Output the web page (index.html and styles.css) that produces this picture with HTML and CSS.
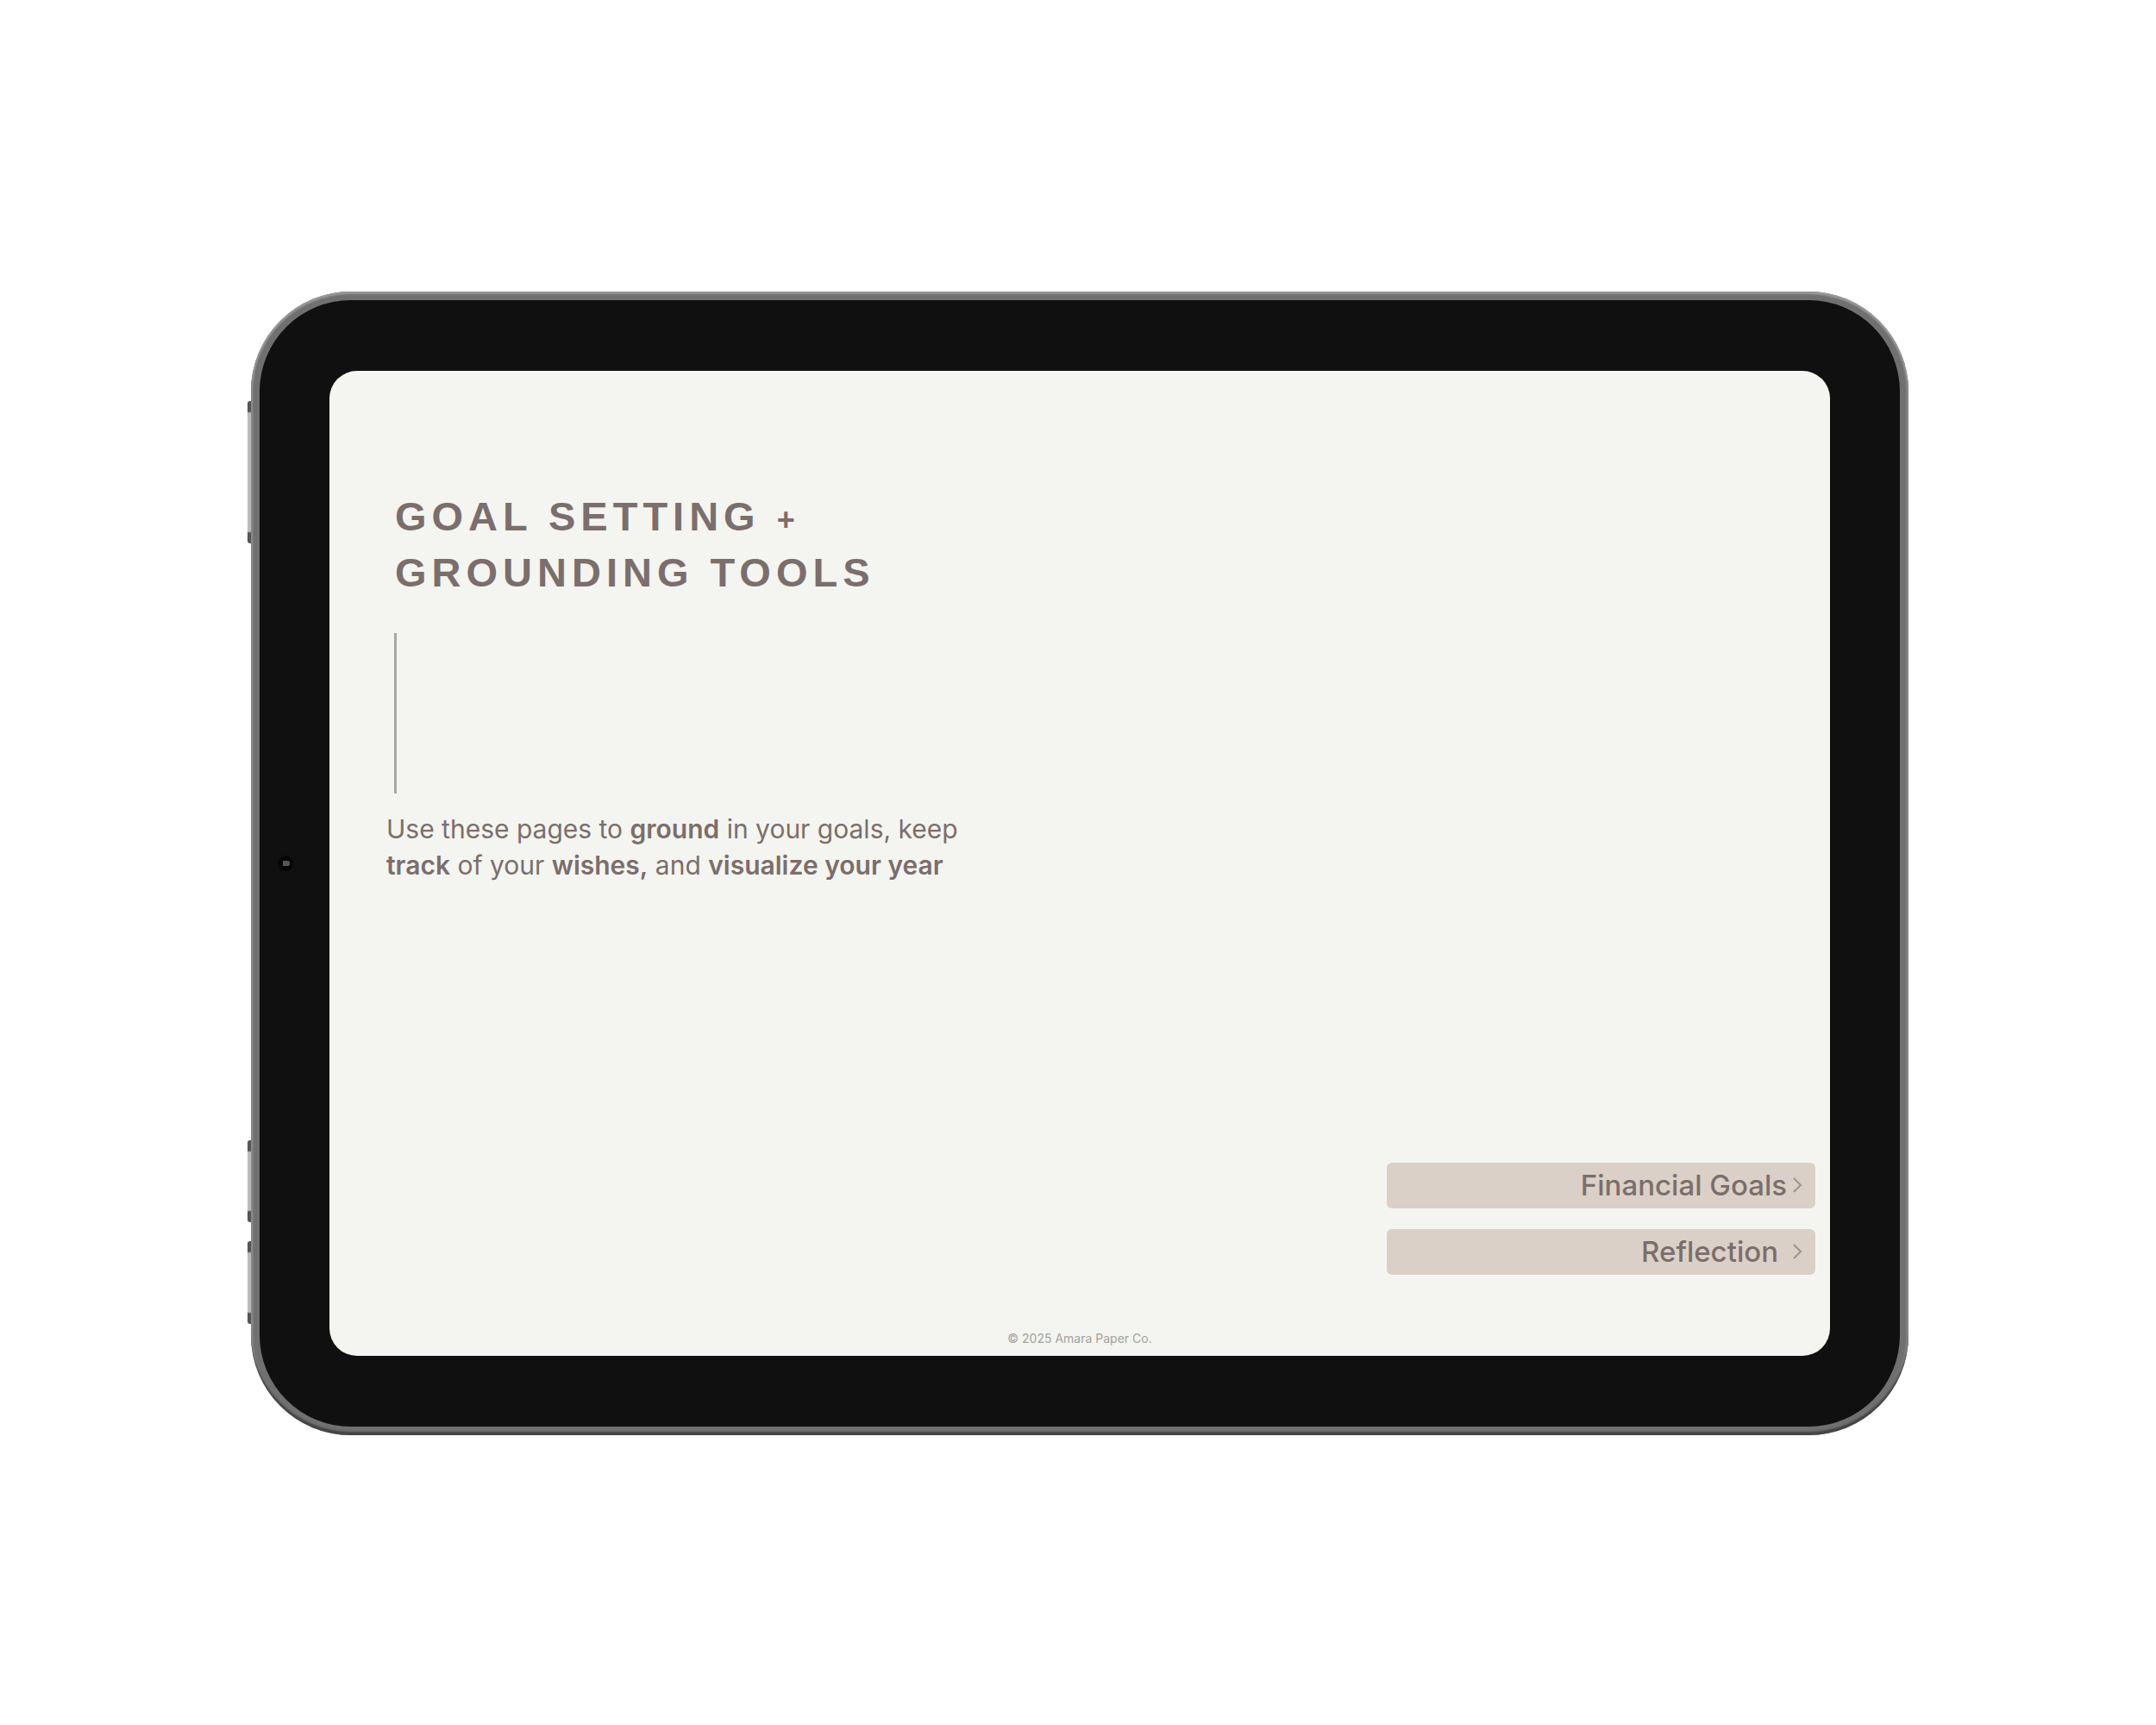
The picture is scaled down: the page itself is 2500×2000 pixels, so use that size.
FILE: index.html
```
<!DOCTYPE html>
<html lang="en">
<head>
    <meta charset="UTF-8">
    <meta name="viewport" content="width=device-width, initial-scale=1.0">
    <title>Goal Setting + Grounding Tools</title>
    <link rel="stylesheet" href="styles.css">
</head>
<body>
    <div class="tablet">
        <span class="side-button power"></span>
        <span class="side-button volume-up"></span>
        <span class="side-button volume-down"></span>
        <div class="bezel">
            <svg class="camera" viewBox="0 0 20 20" aria-hidden="true">
                <circle cx="10" cy="10" r="9" fill="#050505"/>
                <path d="M7 7h6l2 1v4l-2 1H7z" fill="#555"/>
            </svg>
            <main class="screen">
                <header class="intro">
                    <h1>GOAL SETTING <span class="plus">+</span><br>GROUNDING TOOLS</h1>
                    <div class="divider"></div>
                    <p>Use these pages to <strong>ground</strong> in your goals, keep<br><strong>track</strong> of your <strong>wishes,</strong> and <strong>visualize your year</strong></p>
                </header>
                <nav class="links">
                    <a href="#financial-goals">
                        <span>Financial Goals</span>
                        <svg class="chevron" viewBox="0 0 12 20" aria-hidden="true"><path d="M2 2l8 8-8 8"/></svg>
                    </a>
                    <a class="spaced" href="#reflection">
                        <span>Reflection</span>
                        <svg class="chevron" viewBox="0 0 12 20" aria-hidden="true"><path d="M2 2l8 8-8 8"/></svg>
                    </a>
                </nav>
                <footer>© 2025 Amara Paper Co.</footer>
            </main>
        </div>
    </div>
</body>
</html>
```

FILE: styles.css
```
* {
    box-sizing: border-box;
}
body {
    margin: 0;
    min-height: 100vh;
    padding: 2px 287px 0 291px;
    display: flex;
    align-items: center;
    background: #fff;
    color: #7b6e6c;
    font-family: Inter, "Noto Sans", sans-serif;
}

/* device */
.tablet {
    position: relative;
    flex: 1;
    padding: 10px;
    border-radius: 116px;
    background: #707070;
    box-shadow: inset 0 3px 2px #999, inset 0 -4px 2px #444, inset 2px 0 2px #999, inset -2px 0 2px #999;
}
.bezel {
    position: relative;
    padding: 82px 81px;
    border-radius: 106px;
    background: #101010;
}
.side-button {
    position: absolute;
    left: -4px;
    width: 4px;
    border-radius: 3px 0 0 3px;
    background: linear-gradient(#555 0 12px, #bbb 14px calc(100% - 14px), #555 calc(100% - 12px));
}
.power {
    top: 127px;
    height: 165px;
}
.volume-up {
    bottom: 247px;
    height: 95px;
}
.volume-down {
    bottom: 129px;
    height: 96px;
}
.camera {
    position: absolute;
    left: 20px;
    top: 50%;
    width: 20px;
    height: 20px;
    transform: translateY(-50%);
}

/* planner page */
.screen {
    display: flex;
    flex-direction: column;
    aspect-ratio: 1740 / 1142;
    padding: 136px 17px 8px 66px;
    border-radius: 32px;
    background: #f4f5f0;
}
h1 {
    margin: 0;
    padding-left: 10px;
    font-family: "Liberation Sans", Arial, sans-serif;
    font-size: 47px;
    line-height: 65px;
    letter-spacing: 6px;
}
.plus {
    font-size: 36px;
    line-height: 1;
}
.divider {
    width: 3px;
    height: 186px;
    margin: 38px 0 20px 9px;
    background: #a5a8a2;
}
p {
    margin: 0;
    font-size: 30px;
    line-height: 42px;
}
strong {
    font-weight: 600;
}
.links {
    display: flex;
    flex-direction: column;
    align-self: flex-end;
    gap: 24px;
    width: 30%;
    margin-top: auto;
}
.links a {
    display: flex;
    align-items: center;
    justify-content: flex-end;
    gap: 6px;
    height: 53px;
    padding: 0 15px 2px 0;
    border-radius: 6px;
    background: #dbd0c7;
    color: inherit;
    font-size: 33px;
    font-weight: 500;
    text-decoration: none;
}
.links .spaced {
    gap: 16px;
}
.chevron {
    width: 12px;
    height: 20px;
    fill: none;
    stroke: #9d928d;
    stroke-width: 2;
}
footer {
    margin: 62px 49px 0 0;
    color: #a3a19e;
    font-size: 14px;
    line-height: 24px;
    text-align: center;
}
```
